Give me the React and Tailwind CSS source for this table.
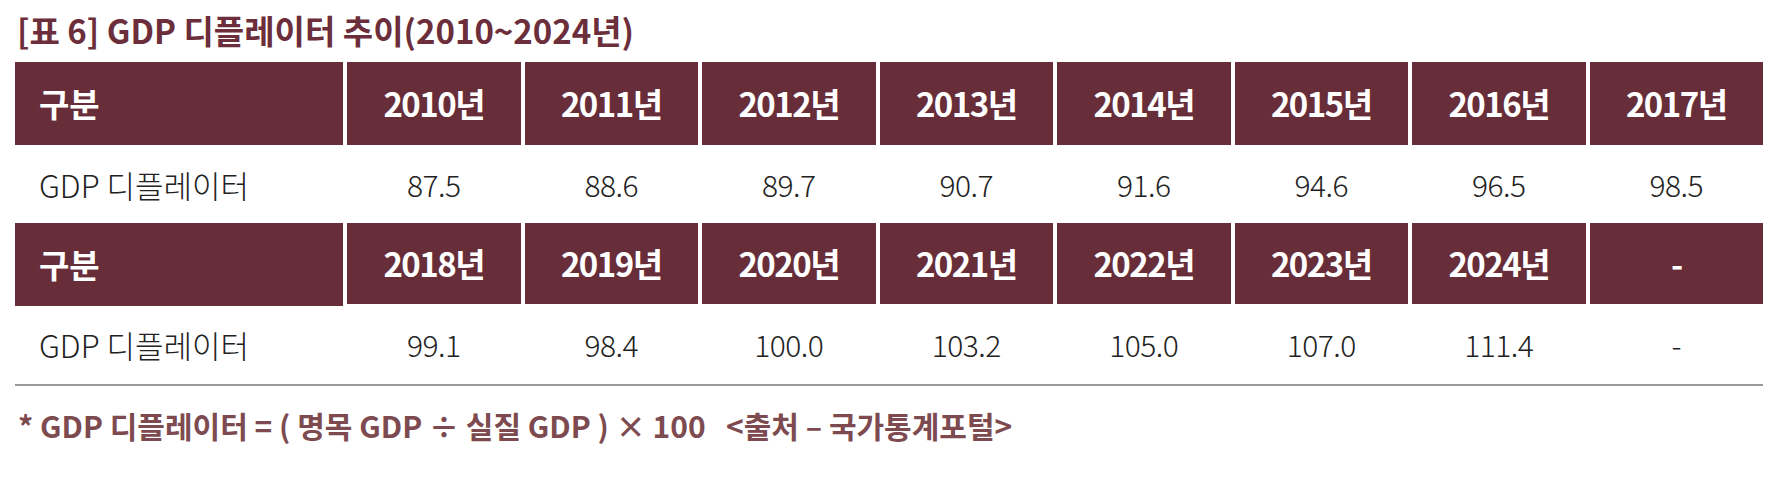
import React from "react";

const row1 = ["2010년", "2011년", "2012년", "2013년", "2014년", "2015년", "2016년", "2017년"];
const val1 = ["87.5", "88.6", "89.7", "90.7", "91.6", "94.6", "96.5", "98.5"];
const row2 = ["2018년", "2019년", "2020년", "2021년", "2022년", "2023년", "2024년", "-"];
const val2 = ["99.1", "98.4", "100.0", "103.2", "105.0", "107.0", "111.4", "-"];

function HeaderRow({ years, first, h }) {
  return (
    <>
      <div className={`bg-[#672e39] text-white font-bold text-[33px] flex items-center pl-[24px] ${first}`}>
        구분
      </div>
      {years.map((y) => (
        <div
          key={y + "h"}
          className={`bg-[#672e39] text-white font-bold text-[33px] tracking-[-1.5px] flex items-center justify-center ${h}`}
        >
          {y}
        </div>
      ))}
    </>
  );
}

function DataRow({ values, h }) {
  return (
    <>
      <div className={`text-[#222] text-[31px] font-light flex items-center pl-[24px] ${h}`}>GDP 디플레이터</div>
      {values.map((v, i) => (
        <div key={i + "v"} className={`text-[#222] text-[30px] font-light tracking-[-0.5px] flex items-center justify-center ${h}`}>
          {v}
        </div>
      ))}
    </>
  );
}

export default function App() {
  return (
    <div
      className="w-[1783px] h-[483px] bg-white pt-[9px] pl-[15px]"
      style={{ fontFamily: '"Noto Sans CJK KR", "Noto Sans", sans-serif' }}
    >
      <div className="text-[33px] font-bold text-[#6b2e3a] leading-[42px] pl-[2px] h-[53px]">
        [표 6] GDP 디플레이터 추이(2010~2024년)
      </div>
      <div className="w-[1748px]">
        <div className="grid grid-cols-[328px_repeat(8,1fr)] gap-x-[4px] leading-none items-start">
          <HeaderRow years={row1} first="h-[83px]" h="h-[83px]" />
          <DataRow values={val1} h="h-[78px]" />
          <HeaderRow years={row2} first="h-[83px]" h="h-[81px]" />
          <DataRow values={val2} h="h-[80px] -mt-[2px]" />
        </div>
        <div className="h-[2px] bg-[#9a9a9a]" />
      </div>
      <div className="mt-[24px] pl-[3px] text-[30px] font-bold text-[#7d4b4f] leading-none whitespace-pre">
        {"* GDP 디플레이터 = ( 명목 GDP ÷ 실질 GDP ) × 100   <출처 – 국가통계포털>"}
      </div>
    </div>
  );
}
